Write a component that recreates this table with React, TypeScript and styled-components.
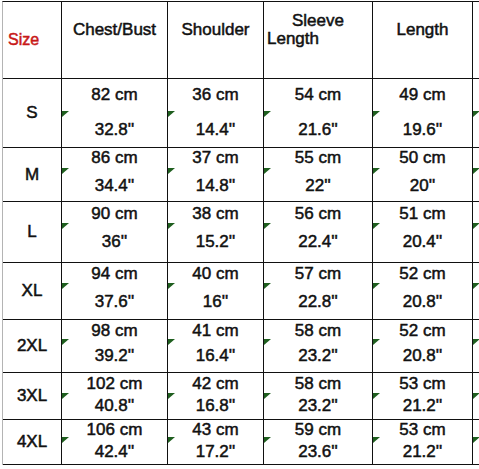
import React from 'react';
import styled, { createGlobalStyle } from 'styled-components';

type SizeRow = {
  size: string;
  h: number;
  pad: number;
  gap: number;
  tri: number;
  cm: string[];
  inch: string[];
};

const rows: SizeRow[] = [
  { size: 'S', h: 69, pad: 6.5, gap: 17, tri: 32, cm: ['82', '36', '54', '49'], inch: ['32.8', '14.4', '21.6', '19.6'] },
  { size: 'M', h: 54, pad: 1, gap: 9.5, tri: 20, cm: ['86', '37', '55', '50'], inch: ['34.4', '14.8', '22', '20'] },
  { size: 'L', h: 61, pad: 2.5, gap: 10.5, tri: 21, cm: ['90', '38', '56', '51'], inch: ['36', '15.2', '22.4', '20.4'] },
  { size: 'XL', h: 57, pad: 1.5, gap: 10.5, tri: 20, cm: ['94', '40', '57', '52'], inch: ['37.6', '16', '22.8', '20.8'] },
  { size: '2XL', h: 53, pad: 1.5, gap: 7.5, tri: 19, cm: ['98', '41', '58', '52'], inch: ['39.2', '16.4', '23.2', '20.8'] },
  { size: '3XL', h: 47, pad: 1.5, gap: 4.5, tri: 20, cm: ['102', '42', '58', '53'], inch: ['40.8', '16.8', '23.2', '21.2'] },
  { size: '4XL', h: 45, pad: 0.5, gap: 4.5, tri: 17, cm: ['106', '43', '59', '53'], inch: ['42.4', '17.2', '23.6', '21.2'] },
];

const Marker = () => (
  <Tri width="7" height="6" viewBox="0 0 7 6">
    <polygon points="0,0 7,0 0,6" fill="#1f5f1f" />
  </Tri>
);

export default function App() {
  return (
    <>
      <GlobalStyle />
      <Table>
        <Row $h={77}>
          <HeadCell $center>
            <SizeLabel>Size</SizeLabel>
          </HeadCell>
          <HeadCell>
            <Line>Chest/Bust</Line>
          </HeadCell>
          <HeadCell>
            <Line>Shoulder</Line>
          </HeadCell>
          <HeadCell $top={9.5}>
            <Line>Sleeve</Line>
            <Line $left>Length</Line>
          </HeadCell>
          <HeadCell>
            <Line>Length</Line>
          </HeadCell>
          <EdgeCell />
        </Row>

        {rows.map((r) => (
          <Row key={r.size} $h={r.h}>
            <SizeCell>{r.size}</SizeCell>
            {r.cm.map((v, i) => (
              <ValueCell key={i} $pad={r.pad} $gap={r.gap}>
                <MarkerSlot $top={r.tri}>
                  <Marker />
                </MarkerSlot>
                <Line>{v} cm</Line>
                <Line>{r.inch[i]}''</Line>
              </ValueCell>
            ))}
            <EdgeCell>
              <MarkerSlot $top={r.tri}>
                <Marker />
              </MarkerSlot>
            </EdgeCell>
          </Row>
        ))}
      </Table>
    </>
  );
}

const GlobalStyle = createGlobalStyle`
  html, body {
    margin: 0;
    padding: 0;
    background: #ffffff;
  }
  body {
    font-family: "Liberation Sans", Arial, sans-serif;
    color: #111;
  }
`;

const Table = styled.div`
  margin: 1px 0 0 2px;
  width: 477px;
  border-top: 1px solid #111;
  border-left: 1px solid #b4b4b4;
`;

const Row = styled.div<{ $h: number }>`
  display: grid;
  grid-template-columns: 59px 106px 96px 109px 100px 1fr;
  height: ${(p) => p.$h}px;
  box-sizing: border-box;
  border-bottom: 1px solid #111;
`;

const Cell = styled.div`
  position: relative;
  box-sizing: border-box;
  border-right: 1px solid #111;
  font-size: 17px;
  font-weight: 400;
  -webkit-text-stroke: 0.5px #111;
  line-height: 18px;
`;

const HeadCell = styled(Cell)<{ $center?: boolean; $top?: number }>`
  display: flex;
  flex-direction: column;
  justify-content: ${(p) => (p.$center ? 'center' : 'flex-start')};
  padding-top: ${(p) => (p.$center ? 0 : p.$top ?? 19)}px;
  line-height: 18.5px;
`;

const SizeLabel = styled.span`
  padding-left: 5px;
  color: #c81818;
  -webkit-text-stroke: 0.5px #c81818;
  font-size: 16px;
`;

const Line = styled.div<{ $left?: boolean }>`
  text-align: ${(p) => (p.$left ? 'left' : 'center')};
  padding-left: ${(p) => (p.$left ? 3 : 0)}px;
  white-space: nowrap;
`;

const SizeCell = styled(Cell)`
  display: flex;
  align-items: center;
  justify-content: center;
`;

const ValueCell = styled(Cell)<{ $pad: number; $gap: number }>`
  display: flex;
  flex-direction: column;
  padding-top: ${(p) => p.$pad}px;
  gap: ${(p) => p.$gap}px;
`;

const EdgeCell = styled.div`
  position: relative;
`;

const MarkerSlot = styled.div<{ $top: number }>`
  position: absolute;
  left: 0;
  top: ${(p) => p.$top}px;
  line-height: 0;
`;

const Tri = styled.svg`
  display: block;
`;
